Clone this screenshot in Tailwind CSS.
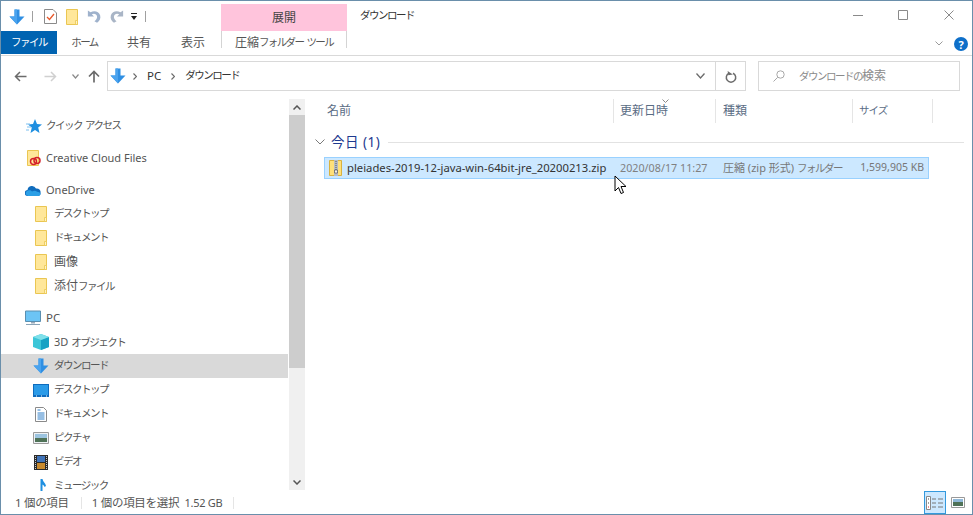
<!DOCTYPE html>
<html lang="ja">
<head>
<meta charset="utf-8">
<script src="https://cdn.jsdelivr.net/npm/@tailwindcss/browser@4"></script>
</head>
<body class="m-0 bg-white">
<svg width="0" height="0" class="absolute">
  <defs>
    <symbol id="down" viewBox="0 0 16 16"><path d="M5.500 0.500h5v7h5L8 15.500 0.500 7.500h5z" fill="#2f8fe3"/><path d="M8 15.500 0.500 7.500h5V0.500H8z" fill="#4aa3ee"/></symbol>
    <symbol id="folder" viewBox="0 0 12 16"><path d="M0.500 0.500h11v15h-11z" fill="#ffe79a" stroke="#eac652"/><path d="M9.500 11.500h2v4h-2z" fill="#fff3c4" stroke="#eac652" stroke-width=".8"/></symbol>
  </defs>
</svg>
<div class="relative w-[973px] h-[515px] overflow-hidden box-border border border-[#6a8fab] bg-white text-[12px] text-[#222] flex flex-col" style="font-family:'Noto Sans','Noto Sans CJK JP',sans-serif">

  <!-- title row -->
  <div class="h-[30px] flex shrink-0">
    <div class="w-[220px] flex items-center pl-[8px] pt-[1px] shrink-0">
      <svg class="w-[16px] h-[16px]"><use href="#down"/></svg>
      <div class="ml-[7px] w-px h-[11px] bg-[#a0a0a0]"></div>
      <svg class="ml-[11px] w-[13px] h-[15px]" viewBox="0 0 13 15"><path d="M.5.500h8.500l3.500 3.500v10.500H.5z" fill="#fff" stroke="#8a8a8a"/><path d="M3 8l2.500 2.500L10 5" fill="none" stroke="#e8582a" stroke-width="1.300"/></svg>
      <svg class="ml-[9px] w-[12px] h-[16px]"><use href="#folder"/></svg>
      <svg class="ml-[9px] w-[14px] h-[15px]" viewBox="0 0 16 16"><path d="M1 1v7h7L5.500 5.500C8 4 11 5 11.500 8c.3 2-1 4-3 5.500l3 1.500c3-2 4.500-5 3.500-8.500C13.500 2 8.500 1 4 3z" fill="#9fb2cc"/></svg>
      <svg class="ml-[9px] w-[14px] h-[15px]" viewBox="0 0 16 16"><path d="M15 1v7H8l2.500-2.500C8 4 5 5 4.500 8c-.3 2 1 4 3 5.500l-3 1.500c-3-2-4.500-5-3.500-8.500C2.500 2 7.500 1 12 3z" fill="#a9b5c6"/></svg>
      <svg class="ml-[6px] w-[8px] h-[10px]" viewBox="0 0 8 10"><path d="M1 1.500h6" stroke="#222"/><path d="M1 4h6L4 8z" fill="#222"/></svg>
      <div class="ml-[7px] w-px h-[11px] bg-[#a0a0a0]"></div>
    </div>
    <div class="w-[126px] mt-[3px] bg-[#ffc4dc] flex items-center justify-center text-[#444] shrink-0">展開</div>
    <div class="ml-[13px] pt-[5px] text-[#333] flex-1"><span class="text-[10.500px] tracking-[-1.500px]">ダウンロード</span></div>
    <div class="flex shrink-0 gap-[35px] pr-[18px] pt-[9px] h-[22px]">
      <svg class="w-[10px] h-[10px]" viewBox="0 0 10 10"><path d="M0 5.500h10" stroke="#8a8a8a"/></svg>
      <svg class="w-[10px] h-[10px]" viewBox="0 0 10 10"><path d="M.5.500h9v9h-9z" fill="none" stroke="#8a8a8a"/></svg>
      <svg class="ml-[1px] w-[10px] h-[10px]" viewBox="0 0 10 10"><path d="M.5.500l9 9M9.500.500l-9 9" stroke="#8a8a8a"/></svg>
    </div>
  </div>

  <!-- tabs -->
  <div class="h-[25px] flex border-b border-[#d9d9d9] shrink-0 text-[#555]">
    <div class="w-[56px] h-[23px] bg-[#0063b1] text-white flex items-center justify-center shrink-0"><span class="text-[10.500px] tracking-[-1.500px]">ファイル</span></div>
    <div class="w-[55px] h-[23px] pt-[1px] flex items-center justify-center shrink-0"><span class="text-[10.500px] tracking-[-1.500px]">ホーム</span></div>
    <div class="w-[54px] h-[23px] pt-[1px] flex items-center justify-center shrink-0">共有</div>
    <div class="w-[54px] h-[23px] pt-[1px] flex items-center justify-center shrink-0">表示</div>
    <div class="ml-[1px] w-[126px] h-[17px] border-x border-[#d4d4d4] flex justify-center shrink-0 pt-[3px] leading-[17px] whitespace-nowrap">圧縮<span class="text-[10.500px] tracking-[-1.600px]">フォルダー</span><span class="ml-[3px] text-[10.500px] tracking-[-1.600px]">ツール</span></div>
    <div class="flex-1"></div>
    <svg class="w-[8px] h-[5px] mt-[10px] mr-[11px]" viewBox="0 0 8 5"><path d="M.5.500L4 4 7.500.500" fill="none" stroke="#9a9a9a"/></svg>
    <div class="w-[14px] h-[14px] mt-[6px] mr-[4px] rounded-full bg-[#0e6fc9] text-white text-[11px] font-bold flex items-center justify-center leading-none">?</div>
  </div>

  <!-- address row -->
  <div class="h-[43px] shrink-0 flex items-start pt-[5px]">
    <div class="w-[106px] h-[30px] flex items-center shrink-0 pl-[13px]">
      <svg class="w-[13px] h-[11px]" viewBox="0 0 13 11"><path d="M12.500 5.500H1.500M6 1L1.500 5.500 6 10" fill="none" stroke="#6b6b6b" stroke-width="1.500"/></svg>
      <svg class="ml-[17px] w-[13px] h-[11px]" viewBox="0 0 13 11"><path d="M.5 5.500h11M7 1l4.500 4.500L7 10" fill="none" stroke="#d0d0d0" stroke-width="1.500"/></svg>
      <svg class="ml-[15px] w-[7px] h-[5px]" viewBox="0 0 7 5"><path d="M.5.500L3.500 4 6.500.500" fill="none" stroke="#8a8a8a" stroke-width="1.200"/></svg>
      <svg class="ml-[9px] w-[12px] h-[13px]" viewBox="0 0 12 13"><path d="M6 12.500V1.500M1 6.500l5-5 5 5" fill="none" stroke="#6b6b6b" stroke-width="1.700"/></svg>
    </div>
    <div class="w-[639px] h-[30px] border border-[#d9d9d9] flex items-center shrink-0">
      <svg class="ml-[2px] w-[16px] h-[16px]"><use href="#down"/></svg>
      <svg class="ml-[7px] w-[4px] h-[7px]" viewBox="0 0 4 7"><path d="M.5.500l3 3-3 3" fill="none" stroke="#6b6b6b" stroke-width="1.200"/></svg>
      <span class="ml-[10px] text-[#333] text-[11.500px]">PC</span>
      <svg class="ml-[10px] w-[4px] h-[7px]" viewBox="0 0 4 7"><path d="M.5.500l3 3-3 3" fill="none" stroke="#6b6b6b" stroke-width="1.200"/></svg>
      <span class="ml-[10px] text-[#333] text-[10.500px] tracking-[-1.500px]">ダウンロード</span>
      <div class="flex-1"></div>
      <svg class="w-[9px] h-[6px] mr-[10px]" viewBox="0 0 9 6"><path d="M.5.500L4.500 5 8.500.500" fill="none" stroke="#6b6b6b" stroke-width="1.300"/></svg>
      <div class="w-[30px] h-full border-l border-[#d9d9d9] flex items-center justify-center">
        <svg class="w-[12px] h-[13px]" viewBox="0 0 12 13"><path d="M8 3.200a4.700 4.700 0 1 1-4 0" fill="none" stroke="#6b6b6b" stroke-width="1.500"/><path d="M3 .5v4.500h4.500z" fill="#6b6b6b" transform="rotate(-10 5 3)"/></svg>
      </div>
    </div>
    <div class="ml-[12px] w-[202px] h-[30px] border border-[#d9d9d9] flex items-center shrink-0 text-[#8a8a8a]">
      <svg class="ml-[14px] w-[12px] h-[12px]" viewBox="0 0 12 12"><circle cx="7.500" cy="4.500" r="3.700" fill="none" stroke="#a8a8a8"/><path d="M4.700 7.300L.5 11.500" stroke="#a8a8a8"/></svg>
      <span class="ml-[14px] whitespace-nowrap"><span class="text-[10.500px] tracking-[-1.500px]">ダウンロードの</span>検索</span>
    </div>
  </div>

  <!-- body -->
  <div class="flex-1 min-h-0 flex">
    <!-- sidebar -->
    <div class="w-[288px] pr-[1px] shrink-0 overflow-hidden pt-[15px] text-[#555]">
      <div class="h-[24px] flex items-center pl-[25px]">
        <svg class="w-[16px] h-[14px]" viewBox="0 0 16 14"><path d="M9 0l2 5 5 .4-3.800 3.100L13.500 14 9 11l-4.500 3 1.300-5.500L2 5.400 7 5z" fill="#1f8fe0"/><path d="M0 5h4M1 8h4M0 11h3" stroke="#7cc0f0"/></svg>
        <span class="ml-[4px] text-[10.500px] tracking-[-1.500px]">クイック</span><span class="ml-[3px] text-[10.500px] tracking-[-1.500px]">アクセス</span>
      </div>
      <div class="h-[8px]"></div>
      <div class="h-[24px] flex items-center pl-[26px]">
        <svg class="w-[14px] h-[16px]" viewBox="0 0 14 16"><path d="M.5.500h11v15H.5z" fill="#ffe79a" stroke="#eac652"/><circle cx="6.500" cy="11.500" r="3" fill="none" stroke="#d4202a" stroke-width="1.500"/><circle cx="10" cy="10.500" r="3" fill="none" stroke="#d4202a" stroke-width="1.500"/></svg>
        <span class="ml-[5px] text-[11px]">Creative Cloud Files</span>
      </div>
      <div class="h-[8px]"></div>
      <div class="h-[24px] flex items-center pl-[24px]">
        <svg class="w-[16px] h-[11px]" viewBox="0 0 16 11"><path d="M3 11a3 3 0 0 1-.5-6 4.500 4.500 0 0 1 8.500-1.500A3.800 3.800 0 0 1 15.500 8c.3 1.500-.8 3-2.500 3z" fill="#0f6cbd"/><path d="M3 11a2.800 2.800 0 0 1 0-5.500c2-.5 3 0 4 1 2-1 4-1 5 .3 2 0 3.500 1 3.500 2 0 1-.8 2.200-2.500 2.200z" fill="#2b9fe6"/></svg>
        <span class="ml-[5px] text-[11px]">OneDrive</span>
      </div>
      <div class="h-[24px] flex items-center pl-[34px]"><svg class="w-[12px] h-[16px]"><use href="#folder"/></svg><span class="ml-[7px] text-[10.500px] tracking-[-1.500px]">デスクトップ</span></div>
      <div class="h-[24px] flex items-center pl-[34px]"><svg class="w-[12px] h-[16px]"><use href="#folder"/></svg><span class="ml-[7px] text-[10.500px] tracking-[-1.500px]">ドキュメント</span></div>
      <div class="h-[24px] flex items-center pl-[34px]"><svg class="w-[12px] h-[16px]"><use href="#folder"/></svg><span class="ml-[7px]">画像</span></div>
      <div class="h-[24px] flex items-center pl-[34px]"><svg class="w-[12px] h-[16px]"><use href="#folder"/></svg><span class="ml-[7px]">添付<span class="text-[10.500px] tracking-[-1.500px]">ファイル</span></span></div>
      <div class="h-[8px]"></div>
      <div class="h-[24px] flex items-center pl-[24px]">
        <svg class="w-[17px] h-[16px]" viewBox="0 0 17 16"><path d="M.5 1h15v10.500H.5z" fill="#6cc4f5" stroke="#5a8fb0"/><path d="M6 12h4v1.500H6z" fill="#9ab"/><path d="M1 14.500h14" stroke="#8aa4b8"/></svg>
        <span class="ml-[4px] text-[11.500px]">PC</span>
      </div>
      <div class="h-[24px] flex items-center pl-[32px]">
        <svg class="w-[16px] h-[16px]" viewBox="0 0 16 16"><path d="M8 0l8 3v10l-8 3-8-3V3z" fill="#3cc6d8"/><path d="M8 6l8-3v10l-8 3z" fill="#17a2c4"/><path d="M8 6L0 3l8-3 8 3z" fill="#7fe0ea"/></svg>
        <span class="ml-[5px] text-[11px]">3D <span class="text-[10.500px] tracking-[-1.500px]">オブジェクト</span></span>
      </div>
      <div class="h-[24px] flex items-center pl-[32px] bg-[#d9d9d9]">
        <svg class="w-[16px] h-[16px]"><use href="#down"/></svg>
        <span class="ml-[5px] text-[10.500px] tracking-[-1.500px]">ダウンロード</span>
      </div>
      <div class="h-[24px] flex items-center pl-[32px]">
        <svg class="w-[16px] h-[13px]" viewBox="0 0 16 13"><path d="M0 0h16v13H0z" fill="#0f6cbd"/><path d="M1 1h14v10H1z" fill="#2b9be8"/><path d="M3 12h1M8 12h1M13 12h1" stroke="#fff"/></svg>
        <span class="ml-[5px] text-[10.500px] tracking-[-1.500px]">デスクトップ</span>
      </div>
      <div class="h-[24px] flex items-center pl-[34px]">
        <svg class="w-[12px] h-[15px]" viewBox="0 0 12 15"><path d="M.5.500h8l3 3v11H.5z" fill="#fff" stroke="#8a8a8a"/><path d="M2.500 3h3M2.500 6h7M2.500 8h7M2.500 10h7M2.500 12h7" stroke="#2f7fc8"/></svg>
        <span class="ml-[7px] text-[10.500px] tracking-[-1.500px]">ドキュメント</span>
      </div>
      <div class="h-[24px] flex items-center pl-[32px]">
        <svg class="w-[16px] h-[12px]" viewBox="0 0 16 12"><path d="M.5.500h15v11H.5z" fill="#eef2f5" stroke="#9a9a9a"/><path d="M2 2h12v4H2z" fill="#9cc4e0"/><path d="M2 6h12v4H2z" fill="#4f7257"/></svg>
        <span class="ml-[5px] text-[10.500px] tracking-[-1.500px]">ピクチャ</span>
      </div>
      <div class="h-[24px] flex items-center pl-[33px]">
        <svg class="w-[14px] h-[15px]" viewBox="0 0 14 15"><path d="M0 0h14v15H0z" fill="#2a2a2a"/><path d="M3 1h8v6H3z" fill="#3f73b8"/><path d="M3 8h8v6H3z" fill="#c88a2e"/><path d="M1.500 1v13M12.500 1v13" stroke="#ccc" stroke-dasharray="1 1"/></svg>
        <span class="ml-[6px] text-[10.500px] tracking-[-1.500px]">ビデオ</span>
      </div>
      <div class="h-[24px] flex items-center pl-[35px]">
        <svg class="w-[11px] h-[15px]" viewBox="0 0 11 15"><path d="M4.500 0h2c.5 3 3 4 3.500 7l-1.500 1C8 6.500 7.500 6 6.500 5.500V13c0 1-1 2-2.500 2H1v-1.500c0-1 1-1.500 3.500-1.500z" fill="#1f8fe0"/></svg>
        <span class="ml-[7px] text-[10.500px] tracking-[-1.500px]">ミュージック</span>
      </div>
    </div>

    <!-- scrollbar -->
    <div class="w-[16px] shrink-0 bg-[#f0f0f0] flex flex-col h-[391px]">
      <div class="h-[16px] flex items-center justify-center shrink-0"><svg class="w-[8px] h-[5px]" viewBox="0 0 8 5"><path d="M.5 4.500L4 1l3.500 3.500" fill="none" stroke="#555" stroke-width="1.500"/></svg></div>
      <div class="h-[253px] bg-[#cdcdcd] shrink-0"></div>
      <div class="flex-1"></div>
      <div class="h-[16px] flex items-center justify-center shrink-0"><svg class="w-[8px] h-[5px]" viewBox="0 0 8 5"><path d="M.5.500L4 4 7.500.500" fill="none" stroke="#555" stroke-width="1.500"/></svg></div>
    </div>

    <!-- content -->
    <div class="flex-1 min-w-0 text-[#555] relative">
      <div class="h-[24px] flex text-[#5a6c84]">
        <div class="w-[309px] pl-[22px] border-r border-[#e5e5e5] flex items-center shrink-0">名前</div>
        <div class="w-[102px] pl-[6px] border-r border-[#e5e5e5] flex items-center relative shrink-0">更新日時
          <svg class="absolute left-[48px] top-[0px] w-[7px] h-[4px]" viewBox="0 0 7 4"><path d="M.5.500L3.500 3.500 6.500.500" fill="none" stroke="#8a8a8a"/></svg>
        </div>
        <div class="w-[137px] pl-[7px] border-r border-[#e5e5e5] flex items-center shrink-0">種類</div>
        <div class="w-[80px] pl-[6px] border-r border-[#e5e5e5] flex items-center shrink-0"><span class="text-[10.500px] tracking-[-1px]">サイズ</span></div>
      </div>
      <div class="h-[26px] mt-[6px] flex items-center pl-[10px]">
        <svg class="w-[10px] h-[6px]" viewBox="0 0 10 6"><path d="M.5.500L5 5 9.500.500" fill="none" stroke="#7a7a7a"/></svg>
        <span class="ml-[6px] text-[#1e3a8f] text-[13.500px] tracking-[0.5px]">今日 (1)</span>
        <div class="ml-[8px] h-px bg-[#e2e2e2] w-[576px]"></div>
      </div>
      <div class="mt-[2px] ml-[19px] w-[605px] h-[22px] bg-[#cce8ff] border border-[#99d1ff] flex items-center">
        <svg class="ml-[4px] w-[13px] h-[16px] shrink-0" viewBox="0 0 13 16"><path d="M.5.500h12v15H.5z" fill="#ffe07a" stroke="#d9b23f"/><path d="M5 0h4v16H5z" fill="#b8bcc4"/><path d="M7 1v9" stroke="#555" stroke-dasharray="1 1"/><path d="M5.500 10h3v3h-3z" fill="#f0f0f0" stroke="#555" stroke-width=".7"/></svg>
        <span class="ml-[5px] w-[273px] text-[#333] text-[11.250px] whitespace-nowrap shrink-0">pleiades-2019-12-java-win-64bit-jre_20200213.zip</span>
        <span class="w-[103px] text-[#808080] text-[10.750px] whitespace-nowrap shrink-0">2020/08/17 11:27</span>
        <span class="w-[127px] text-[#777] text-[11px] whitespace-nowrap shrink-0">圧縮 (zip 形式) <span class="text-[10.500px] tracking-[-1.500px]">フォルダー</span></span>
        <span class="w-[74px] text-right text-[#777] text-[10.500px] whitespace-nowrap shrink-0">1,599,905 KB</span>
      </div>
    </div>
  </div>

  <!-- status bar -->
  <div class="h-[23px] shrink-0 flex items-center text-[#555] text-[11.500px] relative tracking-[-0.3px]">
    <span class="ml-[14px]">1 個の項目</span>
    <div class="ml-[12px] w-px h-[12px] bg-[#e5e5e5]"></div>
    <span class="ml-[10px]">1 個の項目を選択&nbsp;&nbsp;<span class="text-[11px]">1.52 GB</span></span>
    <div class="ml-[11px] w-px h-[12px] bg-[#e5e5e5]"></div>
    <div class="flex-1"></div>
    <div class="w-[22px] h-[23px] bg-[#cce8ff] border border-[#3399dd] flex items-center justify-center shrink-0">
      <svg class="w-[18px] h-[14px]" viewBox="0 0 18 14"><path d="M.5.500h4v13h-4z" fill="#fff" stroke="#888"/><path d="M2 3h1M2 7h1" stroke="#444"/><path d="M2 11h1" stroke="#e02020"/><path d="M6 3h4M12 3h5M6 7h4M12 7h5M6 11h4M12 11h5" stroke="#777"/></svg>
    </div>
    <svg class="ml-[5px] mr-[7px] w-[14px] h-[11px] shrink-0" viewBox="0 0 14 11"><path d="M.5.500h13v10H.5z" fill="#fff" stroke="#999"/><path d="M2 2h10v3H2z" fill="#8fb8d8"/><path d="M2 5h10v4H2z" fill="#4f7257"/></svg>
  </div>

  <!-- mouse pointer -->
  <svg class="absolute left-[613px] top-[174px] w-[13px] h-[20px]" viewBox="0 0 13 20"><path d="M1 1v15l3.500-3.500L7 18.500l2.500-1L7 11.500h5z" fill="#fff" stroke="#000" stroke-width="1"/></svg>
</div>
</body>
</html>
